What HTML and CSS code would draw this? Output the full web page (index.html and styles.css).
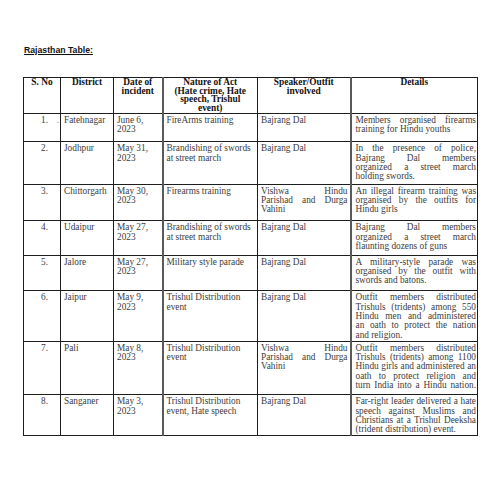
FILE: index.html
```html
<!DOCTYPE html>
<html>
<head>
<meta charset="utf-8">
<link rel="stylesheet" href="styles.css">
</head>
<body>
<div class="page">
  <h1 class="title">Rajasthan Table:</h1>
  <table class="tbl">
    <colgroup>
      <col class="c1"><col class="c2"><col class="c3"><col class="c4"><col class="c5"><col class="c6">
    </colgroup>
    <thead>
      <tr class="rh">
        <th>S. No</th>
        <th>District</th>
        <th class="thick-r">Date of<br>incident</th>
        <th>Nature of Act<br>(Hate crime, Hate<br>speech, Trishul<br>event)</th>
        <th class="thick-r">Speaker/Outfit<br>involved</th>
        <th>Details</th>
      </tr>
    </thead>
    <tbody>
      <tr class="r1">
        <td class="num">1.<span class="stray">.</span></td>
        <td>Fatehnagar</td>
        <td class="thick-r">June 6, 2023</td>
        <td>FireArms training</td>
        <td class="thick-r">Bajrang Dal</td>
        <td class="det"><span class="ln">Members organised firearms</span><span class="ln end">training for Hindu youths</span></td>
      </tr>
      <tr class="r2">
        <td class="num">2.</td>
        <td>Jodhpur</td>
        <td class="thick-r">May 31, 2023</td>
        <td>Brandishing of swords at street march</td>
        <td class="thick-r">Bajrang Dal</td>
        <td class="det"><span class="ln">In the presence of police,</span><span class="ln">Bajrang Dal members</span><span class="ln">organized a street march</span><span class="ln end">holding swords.</span></td>
      </tr>
      <tr class="r3">
        <td class="num">3.</td>
        <td>Chittorgarh</td>
        <td class="thick-r">May 30, 2023</td>
        <td>Firearms training</td>
        <td class="thick-r spk"><span class="ln">Vishwa Hindu</span><span class="ln">Parishad and Durga</span><span class="ln end">Vahini</span></td>
        <td class="det"><span class="ln">An illegal firearm training was</span><span class="ln">organised by the outfits for</span><span class="ln end">Hindu girls</span></td>
      </tr>
      <tr class="r4">
        <td class="num">4.</td>
        <td>Udaipur</td>
        <td class="thick-r">May 27, 2023</td>
        <td>Brandishing of swords at street march</td>
        <td class="thick-r">Bajrang Dal</td>
        <td class="det"><span class="ln">Bajrang Dal members</span><span class="ln">organized a street march</span><span class="ln end">flaunting dozens of guns</span></td>
      </tr>
      <tr class="r5">
        <td class="num">5.</td>
        <td>Jalore</td>
        <td class="thick-r">May 27, 2023</td>
        <td>Military style parade</td>
        <td class="thick-r">Bajrang Dal</td>
        <td class="det"><span class="ln">A military-style parade was</span><span class="ln">organised by the outfit with</span><span class="ln end">swords and batons.</span></td>
      </tr>
      <tr class="r6">
        <td class="num">6.</td>
        <td>Jaipur</td>
        <td class="thick-r">May 9, 2023</td>
        <td>Trishul Distribution event</td>
        <td class="thick-r">Bajrang Dal</td>
        <td class="det"><span class="ln">Outfit members distributed</span><span class="ln">Trishuls (tridents) among 550</span><span class="ln">Hindu men and administered</span><span class="ln">an oath to protect the nation</span><span class="ln end">and religion.</span></td>
      </tr>
      <tr class="r7">
        <td class="num">7.</td>
        <td>Pali</td>
        <td class="thick-r">May 8, 2023</td>
        <td>Trishul Distribution event</td>
        <td class="thick-r spk"><span class="ln">Vishwa Hindu</span><span class="ln">Parishad and Durga</span><span class="ln end">Vahini</span></td>
        <td class="det"><span class="ln">Outfit members distributed</span><span class="ln">Trishuls (tridents) among 1100</span><span class="ln">Hindu girls and administered an</span><span class="ln">oath to protect religion and</span><span class="ln">turn India into a Hindu nation.</span></td>
      </tr>
      <tr class="r8">
        <td class="num">8.</td>
        <td>Sanganer</td>
        <td class="thick-r">May 3, 2023</td>
        <td>Trishul Distribution event, Hate speech</td>
        <td class="thick-r">Bajrang Dal</td>
        <td class="det"><span class="ln">Far-right leader delivered a hate</span><span class="ln">speech against Muslims and</span><span class="ln">Christians at a Trishul Deeksha</span><span class="ln end">(trident distribution) event.</span></td>
      </tr>
    </tbody>
  </table>
</div>
</body>
</html>
```

FILE: styles.css
```css
html, body {
  margin: 0;
  padding: 0;
  background: #ffffff;
}
.page {
  padding: 45px 0 0 23px;
}
.title {
  margin: 0 0 21px 1px;
  font-family: "Liberation Sans", Arial, sans-serif;
  font-weight: bold;
  font-size: 8.7px;
  line-height: 11px;
  text-decoration: underline;
  color: #111;
}
.tbl {
  border-collapse: collapse;
  table-layout: fixed;
  width: 454px;
  font-family: "Liberation Serif", "Times New Roman", serif;
  font-size: 9.3px;
  line-height: 9.3px;
  color: #3c3c3c;
}
.c1 { width: 37px; }
.c2 { width: 53px; }
.c3 { width: 49px; }
.c4 { width: 95px; }
.c5 { width: 93px; }
.c6 { width: 127px; }
.tbl th, .tbl td {
  border: 1px solid #1e1e1e;
  vertical-align: top;
  padding: 2px 2px 0 3px;
  text-align: left;
}
.tbl th {
  font-weight: bold;
  font-size: 9.4px;
  line-height: 8.7px;
  text-align: center;
  color: #111;
  padding: 0 2px;
}
.tbl .thick-r {
  border-right: 2px solid #5a5a5a;
}
.tbl .num {
  text-align: right;
  padding-right: 12px;
  position: relative;
}
.stray {
  position: absolute;
  right: 1px;
  top: 2px;
  color: #888;
}
.tbl .det {
  padding: 2px 1px 0 4px;
}
.tbl .spk {
  padding-right: 2px;
}
.ln {
  display: block;
  text-align: justify;
  text-align-last: justify;
}
.ln.end {
  text-align-last: left;
}
.rh { height: 34px; }
.r1 { height: 28.5px; }
.r2 { height: 42.5px; }
.r3 { height: 36.5px; }
.r4 { height: 34.5px; }
.r5 { height: 35.5px; }
.r6 { height: 50.5px; }
.r7 { height: 53.5px; }
.r8 { height: 35.5px; }
```
